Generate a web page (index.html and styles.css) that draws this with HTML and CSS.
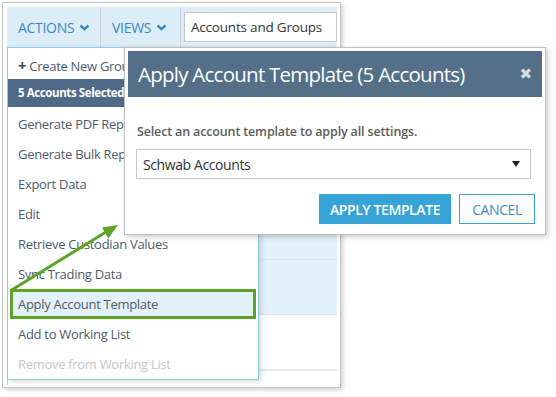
FILE: index.html
```html
<!DOCTYPE html>
<html lang="en">
<head>
  <meta charset="UTF-8">
  <meta name="viewport" content="width=device-width, initial-scale=1.0">
  <title>Apply Account Template</title>
  <link rel="stylesheet" href="styles.css">
</head>
<body>
  <div class="stage">

    <!-- Background app: toolbar, grid and the open Actions menu -->
    <div class="app">
      <div class="toolbar">
        <div class="tb-btn tb-actions">ACTIONS
          <svg class="chev" width="11" height="7" viewBox="0 0 11 7"><polyline points="1.5,1.5 5.5,5.2 9.5,1.5" /></svg>
        </div>
        <div class="tb-btn tb-views">VIEWS
          <svg class="chev" width="11" height="7" viewBox="0 0 11 7"><polyline points="1.5,1.5 5.5,5.2 9.5,1.5" /></svg>
        </div>
        <div class="search">Accounts and Groups</div>
      </div>

      <div class="grid">
        <div class="grid-row selected first"></div>
        <div class="grid-row selected second"></div>
        <div class="grid-row third"></div>
        <div class="grid-row"></div>
      </div>

      <ul class="menu">
        <li class="menu-create"><span class="plus">+</span> Create New Group</li>
        <li class="menu-header">5 Accounts Selected for Action</li>
        <li class="menu-spacer"></li>
        <li>Generate PDF Reports</li>
        <li>Generate Bulk Reports</li>
        <li>Export Data</li>
        <li>Edit</li>
        <li>Retrieve Custodian Values</li>
        <li>Sync Trading Data</li>
        <li class="active">Apply Account Template</li>
        <li>Add to Working List</li>
        <li class="disabled">Remove from Working List</li>
      </ul>
    </div>

    <!-- Modal dialog -->
    <div class="dialog">
      <div class="dialog-header">
        <span class="dialog-title">Apply Account Template (5 Accounts)</span>
        <span class="dialog-close">&#x2716;</span>
      </div>
      <div class="dialog-body">
        <div class="dialog-label">Select an account template to apply all settings.</div>
        <div class="select">
          <span>Schwab Accounts</span>
          <span class="caret"></span>
        </div>
        <div class="dialog-buttons">
          <button class="btn btn-primary">APPLY TEMPLATE</button>
          <button class="btn btn-default">CANCEL</button>
        </div>
      </div>
    </div>

    <!-- Callout arrow -->
    <svg class="callout" width="556" height="397" viewBox="0 0 556 397">
      <line x1="10" y1="289" x2="106" y2="230" />
      <polygon points="118,223 108.3,236.5 102,225.5" />
    </svg>
  </div>
</body>
</html>
```

FILE: styles.css
```css
body {
  margin: 0;
  background-color: white;
  font-family: "Open Sans", "Noto Sans", sans-serif;
}

.stage {
  position: relative;
  width: 556px;
  height: 397px;
}

/* ---------- background app ---------- */

.app {
  position: relative;
  box-sizing: border-box;
  margin: 2px 0 0 2px;
  width: 339px;
  height: 386px;
  padding: 4px 3px 0 4px;
  border: 1px solid #c4c4c4;
  box-shadow: 2px 2px 4px rgba(0, 0, 0, 0.18);
  background-color: white;
}

.toolbar {
  display: flex;
  align-items: center;
  height: 40px;
  background-color: #ddedf8;
}

.tb-btn {
  box-sizing: border-box;
  display: flex;
  align-items: center;
  height: 40px;
  padding-left: 11px;
  border-right: 1px solid #c9d6df;
  color: #3a89c3;
  font-size: 14px;
  letter-spacing: -0.3px;
}

.tb-actions {
  width: 94px;
}

.tb-views {
  width: 80px;
}

.chev {
  margin-left: 5px;
  fill: none;
  stroke: #3a89c3;
  stroke-width: 2.4;
}

.search {
  box-sizing: border-box;
  height: 30px;
  margin-left: 3px;
  flex: 1;
  padding-left: 6px;
  border: 1px solid #c8c8c8;
  background-color: white;
  color: #333;
  font-size: 13.5px;
  letter-spacing: -0.2px;
  line-height: 28px;
}

.grid {
  height: 338px;
  border-left: 1px solid #cfcfcf;
}

.grid-row {
  border-bottom: 1px solid #e6e6e6;
}

.grid-row.selected {
  background-color: #e3f1fa;
  border-bottom-color: #d6e6f0;
}

.grid-row.first {
  height: 212px;
}

.grid-row.second {
  height: 54px;
}

.grid-row.third {
  height: 54px;
}

/* ---------- actions menu ---------- */

.menu {
  position: absolute;
  left: 4px;
  top: 44px;
  box-sizing: border-box;
  width: 252px;
  height: 333px;
  margin: 0;
  padding: 0;
  list-style: none;
  background-color: white;
  border: 1px solid #8fcbea;
  box-shadow: 2px 2px 5px rgba(0, 0, 0, 0.15);
}

.menu li {
  box-sizing: border-box;
  height: 30px;
  padding-left: 10px;
  color: #4e5b69;
  font-size: 13px;
  letter-spacing: -0.3px;
  line-height: 30px;
  white-space: nowrap;
  overflow: hidden;
}

.menu li.menu-create {
  height: 31px;
  padding-top: 2px;
}

.plus {
  color: #444;
  font-weight: bold;
  font-size: 15px;
}

.menu li.menu-header {
  height: 28px;
  line-height: 28px;
  background-color: #4e6a86;
  color: white;
  font-weight: bold;
  font-size: 11.5px;
  letter-spacing: -0.4px;
}

.menu li.menu-spacer {
  height: 2px;
}

.menu li.active {
  margin: 0 2px;
  padding-left: 8px;
  background-color: #e3f1fa;
  outline: 3px solid #5fa22a;
  outline-offset: -3px;
}

.menu li.disabled {
  color: #c6c6c6;
}

/* ---------- dialog ---------- */

.dialog {
  position: absolute;
  left: 124px;
  top: 45px;
  box-sizing: border-box;
  width: 422px;
  height: 188px;
  padding: 3px;
  border: 1px solid #bfbfbf;
  background-color: white;
  box-shadow: 2px 2px 5px rgba(0, 0, 0, 0.2);
}

.dialog-header {
  display: flex;
  align-items: center;
  justify-content: space-between;
  height: 46px;
  padding: 0 10px 0 10px;
  background-color: #546f88;
  color: white;
}

.dialog-title {
  font-size: 20.5px;
  letter-spacing: -0.75px;
  line-height: 28px;
}

.dialog-close {
  color: #d8dde3;
  font-size: 15px;
  line-height: 20px;
  font-family: "DejaVu Sans", sans-serif;
}

.dialog-body {
  padding: 0 11px 0 8px;
}

.dialog-label {
  height: 17px;
  margin: 26px 0 9px 1px;
  color: #5b5b5b;
  font-size: 12.5px;
  font-weight: 600;
  letter-spacing: -0.15px;
  line-height: 17px;
}

.select {
  box-sizing: border-box;
  display: flex;
  align-items: center;
  justify-content: space-between;
  width: 395px;
  height: 30px;
  padding: 0 10px 0 6px;
  border: 1px solid #c8c8c8;
  color: #333;
  font-size: 14px;
  letter-spacing: -0.4px;
}

.caret {
  width: 0;
  height: 0;
  border-left: 4px solid transparent;
  border-right: 4px solid transparent;
  border-top: 6px solid #222;
}

.dialog-buttons {
  display: flex;
  justify-content: flex-end;
  gap: 8px;
  margin-top: 15px;
  margin-right: -4px;
}

.btn {
  box-sizing: border-box;
  height: 30px;
  padding: 0;
  border: 1px solid #35a3d5;
  font-family: "Open Sans", sans-serif;
  font-size: 14px;
  letter-spacing: -0.4px;
  white-space: nowrap;
  cursor: pointer;
}

.btn-primary {
  width: 132px;
  background-color: #36a4d6;
  color: white;
  font-weight: 600;
}

.btn-default {
  width: 76px;
  background-color: white;
  color: #3a8fc4;
}

/* ---------- callout arrow ---------- */

.callout {
  position: absolute;
  left: 0;
  top: 0;
  pointer-events: none;
}

.callout line {
  stroke: #5fa42a;
  stroke-width: 3;
}

.callout polygon {
  fill: #5fa42a;
}
```
